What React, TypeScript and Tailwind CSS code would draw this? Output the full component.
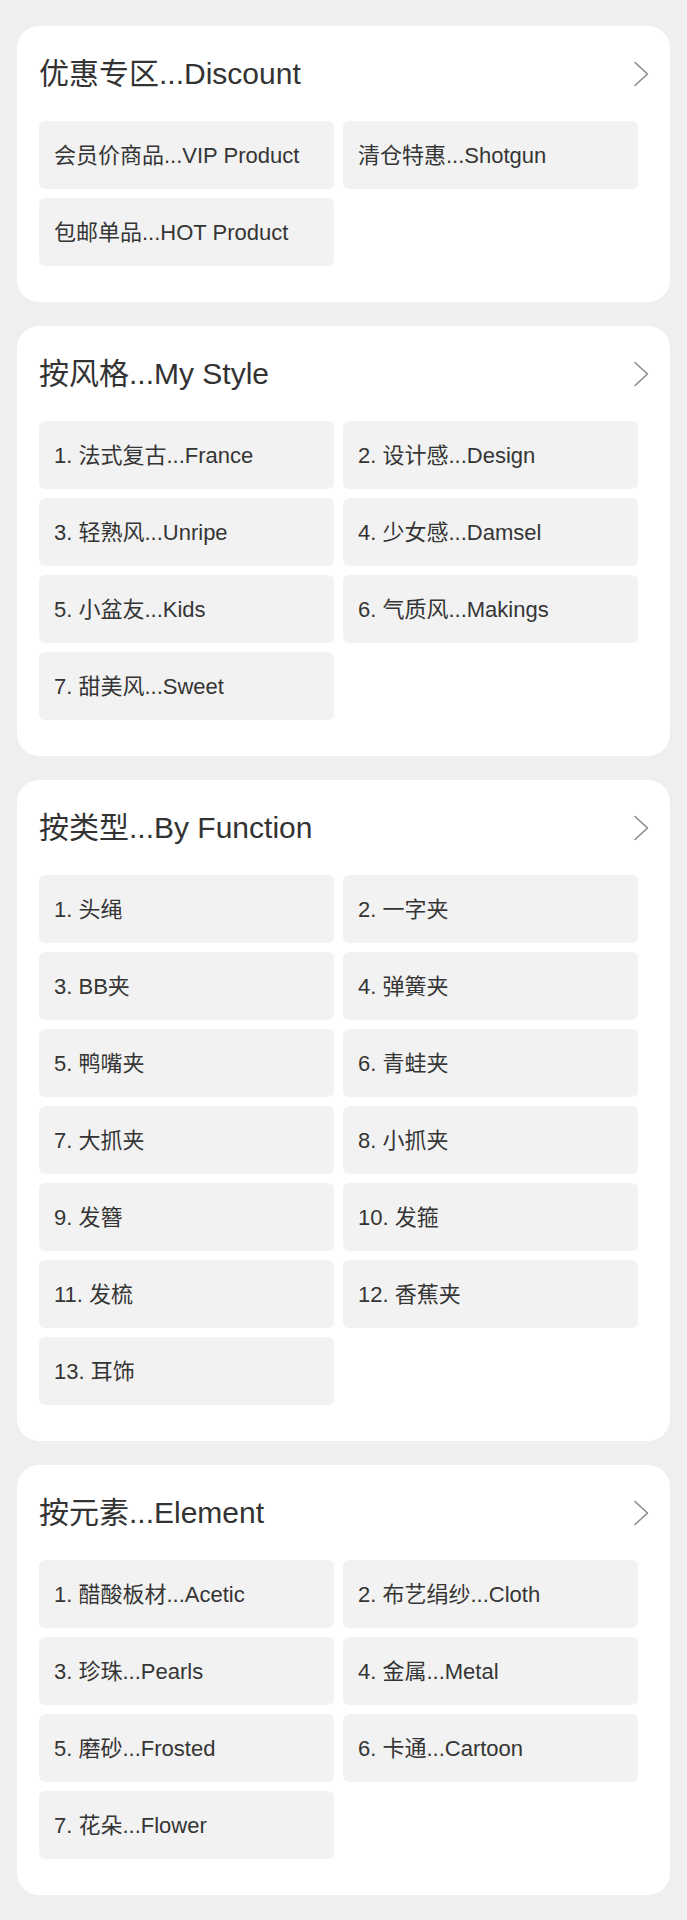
type Section = {
  title: string
  items: string[]
}

const sections: Section[] = [
  {
    title: '优惠专区...Discount',
    items: ['会员价商品...VIP Product', '清仓特惠...Shotgun', '包邮单品...HOT Product'],
  },
  {
    title: '按风格...My Style',
    items: [
      '1. 法式复古...France',
      '2. 设计感...Design',
      '3. 轻熟风...Unripe',
      '4. 少女感...Damsel',
      '5. 小盆友...Kids',
      '6. 气质风...Makings',
      '7. 甜美风...Sweet',
    ],
  },
  {
    title: '按类型...By Function',
    items: [
      '1. 头绳',
      '2. 一字夹',
      '3. BB夹',
      '4. 弹簧夹',
      '5. 鸭嘴夹',
      '6. 青蛙夹',
      '7. 大抓夹',
      '8. 小抓夹',
      '9. 发簪',
      '10. 发箍',
      '11. 发梳',
      '12. 香蕉夹',
      '13. 耳饰',
    ],
  },
  {
    title: '按元素...Element',
    items: [
      '1. 醋酸板材...Acetic',
      '2. 布艺绢纱...Cloth',
      '3. 珍珠...Pearls',
      '4. 金属...Metal',
      '5. 磨砂...Frosted',
      '6. 卡通...Cartoon',
      '7. 花朵...Flower',
    ],
  },
]

// 右箭头
function Arrow() {
  return (
    <svg width="17" height="26" viewBox="0 0 17 26" fill="none" className="mr-[-12px] text-[#8a8a8a]">
      <path d="M2 1.5 L14.5 13 L2 24.5" stroke="currentColor" strokeWidth={1.6} strokeLinecap="round" strokeLinejoin="round" />
    </svg>
  )
}

// 分类卡片
function CategoryCard({ title, items }: Section) {
  return (
    <div className="rounded-[22px] bg-white pb-[36px] pl-[22px] pr-[32px]">
      <div className="flex h-[95px] items-center justify-between">
        <span className="text-[30px] leading-none text-[#333333]">{title}</span>
        <Arrow />
      </div>
      <div className="grid grid-cols-2 gap-[9px]">
        {items.map((item) => (
          <div
            key={item}
            className="flex h-[68px] items-center rounded-[6px] bg-[#f2f2f2] pl-[15px] text-[22px] text-[#353535]"
          >
            {item}
          </div>
        ))}
      </div>
    </div>
  )
}

export default function App() {
  return (
    <div
      className="min-h-[1920px] bg-[#efefef] px-[17px] pb-[25px] pt-[26px]"
      style={{ fontFamily: '"Liberation Sans", "Noto Sans CJK SC", sans-serif' }}
    >
      <div className="flex flex-col gap-[24px]">
        {sections.map((s) => (
          <CategoryCard key={s.title} {...s} />
        ))}
      </div>
    </div>
  )
}
